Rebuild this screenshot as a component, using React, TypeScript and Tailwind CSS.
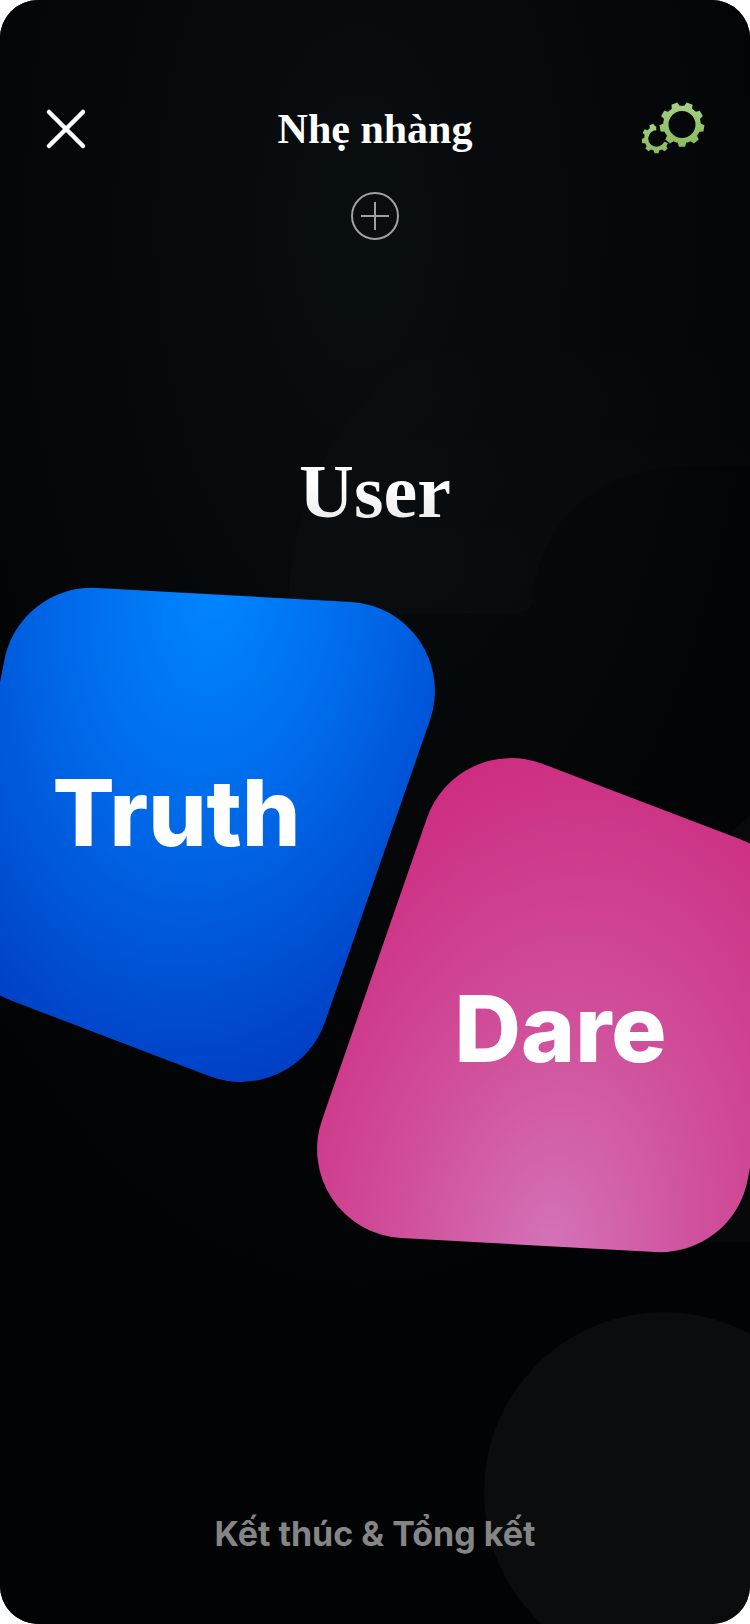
const SHAPE =
  "M4 75A89 89 0 0 1 97 1L351 15A89 89 0 0 1 430 133L325 435A89 89 0 0 1 209 489L15 415Q-56 388 -46 330Z";

function gearPath(cx: number, cy: number, teeth: number, outer: number, root: number) {
  const step = (Math.PI * 2) / teeth;
  const at = (radius: number, angle: number) =>
    `${(cx + radius * Math.sin(angle)).toFixed(2)} ${(cy - radius * Math.cos(angle)).toFixed(2)}`;
  let d = "";
  for (let i = 0; i < teeth; i++) {
    const a = Math.PI + i * step;
    d += `${i ? "L" : "M"}${at(root, a - step * 0.32)}L${at(outer, a - step * 0.2)}L${at(outer, a + step * 0.2)}L${at(root, a + step * 0.32)}`;
    d += `A${root} ${root} 0 0 1 ${at(root, a + step * 0.68)}`;
  }
  return d + "Z";
}

function Backdrop() {
  return (
    <svg className="absolute inset-0 -z-10 h-full w-full" viewBox="0 0 750 1624" preserveAspectRatio="xMidYMid slice" aria-hidden="true">
      <defs>
        <radialGradient id="glow" gradientUnits="userSpaceOnUse" cx="0" cy="0" r="1" gradientTransform="translate(360 230) scale(560 1100)">
          <stop offset="0" stopColor="#090e11" />
          <stop offset="0.4" stopColor="#06090b" />
          <stop offset="0.75" stopColor="#030405" />
          <stop offset="1" stopColor="#020304" />
        </radialGradient>
        <linearGradient id="hook" x1="0" y1="0" x2="0" y2="1">
          <stop offset="0" stopColor="#fff" stopOpacity="0" />
          <stop offset="1" stopColor="#fff" stopOpacity="0.014" />
        </linearGradient>
      </defs>
      <rect width="750" height="1624" fill="url(#glow)" />
      <path d="M288 613C290 440 400 310 600 310H750V466H690C600 466 538 520 533 598Q531 613 514 613Z" fill="url(#hook)" />
      <path d="M750 815L725 838C620 930 560 1050 560 1242H750Z" fill="#fff" fillOpacity="0.025" />
      <circle cx="664" cy="1492" r="180" fill="#fff" fillOpacity="0.04" />
    </svg>
  );
}

export default function App() {
  return (
    <div className="min-h-screen bg-white">
      <main className="relative isolate flex min-h-screen flex-col overflow-hidden rounded-[38px] bg-black text-white">
        <Backdrop />
        <header className="flex items-center justify-between px-11 pt-[97px]">
          <button type="button" aria-label="Close" className="flex h-16 w-16 items-center">
            <svg width="44" height="44" viewBox="0 0 44 44" fill="none" stroke="#fff" strokeWidth="4.5" strokeLinecap="round">
              <path d="M5 5L39 39M39 5L5 39" />
            </svg>
          </button>
          <h1 className="font-['Liberation_Serif',serif] text-[42px] leading-[48px] font-bold">Nhẹ nhàng</h1>
          <button type="button" aria-label="Settings" className="flex h-16 w-16 items-center justify-end">
            <svg width="64" height="56" viewBox="0 0 64 56">
              <defs>
                <linearGradient id="leaf" x1="0" y1="0" x2="0" y2="1">
                  <stop offset="0" stopColor="#a9d08a" />
                  <stop offset="0.5" stopColor="#94c56c" />
                  <stop offset="1" stopColor="#8cbd63" />
                </linearGradient>
                <mask id="cut" maskUnits="userSpaceOnUse" x="-2" y="0" width="66" height="56">
                  <rect x="-2" width="66" height="56" fill="#fff" />
                  <circle cx="14.5" cy="37.5" r="8.3" fill="#000" />
                  <path d="M14.5 37.5L14 16H40V45L28 43Z" fill="#000" />
                </mask>
              </defs>
              <path d={gearPath(40, 23.5, 9, 22.5, 18.8) + "M53.5 23.5A13.5 13.5 0 1 0 26.5 23.5A13.5 13.5 0 1 0 53.5 23.5Z"} fill="url(#leaf)" fillRule="evenodd" />
              <path d={gearPath(14.5, 37.5, 9, 15, 12.3)} fill="url(#leaf)" mask="url(#cut)" />
            </svg>
          </button>
        </header>
        <div className="mt-[30px] flex justify-center">
          <button type="button" aria-label="Add">
            <svg width="50" height="50" viewBox="0 0 50 50" fill="none" stroke="#a0a0a0" strokeWidth="2">
              <circle cx="25" cy="25" r="23" />
              <path d="M11 25H39M25 11V39" />
            </svg>
          </button>
        </div>
        <h2 className="mx-auto mt-[206px] bg-linear-to-t from-[#e4e4e4] to-white to-60% bg-clip-text font-['Liberation_Serif',serif] text-[76px] leading-[88px] font-bold text-transparent">
          User
        </h2>
        <div className="mt-[52px] flex flex-col font-['Inter',sans-serif] text-[92px] leading-[112px] font-extrabold">
          <button type="button" className="pointer-events-none -ml-[82px] grid w-[517px] place-items-center self-start">
            <svg className="[grid-area:1/1]" width="517" height="496" viewBox="-82 0 517 496" aria-hidden="true">
              <defs>
                <radialGradient id="blue" gradientUnits="userSpaceOnUse" cx="0" cy="0" r="1" gradientTransform="translate(215 0) rotate(8) scale(370 580)">
                  <stop offset="0" stopColor="#0086ff" />
                  <stop offset="0.4" stopColor="#006ae9" />
                  <stop offset="1" stopColor="#0035bd" />
                </radialGradient>
              </defs>
              <path className="pointer-events-auto" d={SHAPE} fill="url(#blue)" />
            </svg>
            <span className="z-10 pb-11 [grid-area:1/1]">Truth</span>
          </button>
          <button type="button" className="pointer-events-none -mt-[326px] -mr-[84px] grid w-[517px] place-items-center self-end">
            <svg className="[grid-area:1/1]" width="517" height="496" viewBox="0 0 517 496" aria-hidden="true">
              <defs>
                <radialGradient id="pink" gradientUnits="userSpaceOnUse" cx="0" cy="0" r="1" gradientTransform="translate(202 0) rotate(8) scale(370 580)">
                  <stop offset="0" stopColor="#d473b8" />
                  <stop offset="0.4" stopColor="#d0509b" />
                  <stop offset="1" stopColor="#cc267c" />
                </radialGradient>
              </defs>
              <path className="pointer-events-auto" d={SHAPE} fill="url(#pink)" transform="translate(435 496) rotate(180)" />
            </svg>
            <span className="z-10 pt-12 pr-[30px] [grid-area:1/1]">Dare</span>
          </button>
        </div>
        <footer className="mt-auto flex justify-center pb-[66px]">
          <button type="button" className="font-['Inter',sans-serif] text-[34px] leading-[48px] font-bold text-[#858585]">
            Kết thúc &amp; Tổng kết
          </button>
        </footer>
      </main>
    </div>
  );
}
